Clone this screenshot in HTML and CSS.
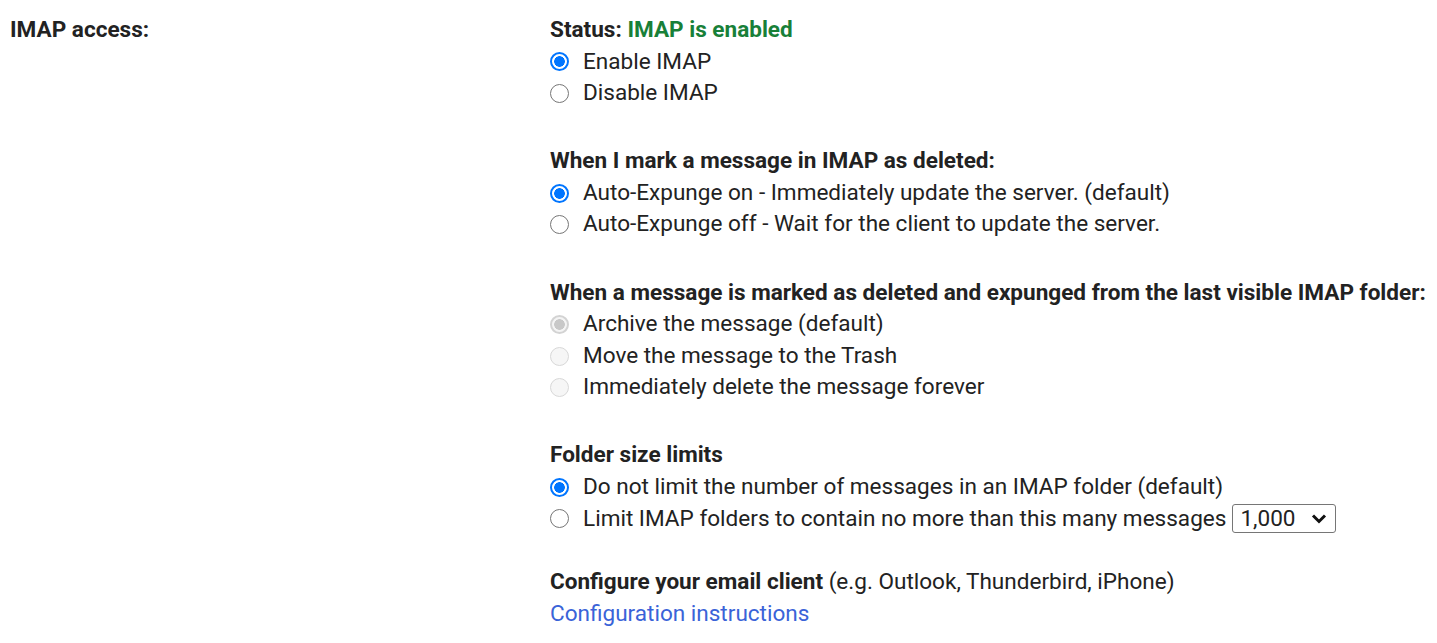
FILE: index.html
```html
<!DOCTYPE html>
<html>
<head>
<meta charset="utf-8">
<link rel="stylesheet" href="styles.css">
</head>
<body>
<div class="settings-row">
  <div class="label">IMAP access:</div>
  <div class="content">
    <div class="section">
      <div class="heading">Status: <span class="ok">IMAP is enabled</span></div>
      <label class="option"><input type="radio" name="imap" class="radio" checked><span>Enable IMAP</span></label>
      <label class="option"><input type="radio" name="imap" class="radio"><span>Disable IMAP</span></label>
    </div>
    <div class="section">
      <div class="heading">When I mark a message in IMAP as deleted:</div>
      <label class="option"><input type="radio" name="exp" class="radio" checked><span>Auto-Expunge on - Immediately update the server. (default)</span></label>
      <label class="option"><input type="radio" name="exp" class="radio"><span>Auto-Expunge off - Wait for the client to update the server.</span></label>
    </div>
    <div class="section">
      <div class="heading">When a message is marked as deleted and expunged from the last visible IMAP folder:</div>
      <label class="option disabled"><input type="radio" name="del" class="radio" checked disabled><span>Archive the message (default)</span></label>
      <label class="option disabled"><input type="radio" name="del" class="radio" disabled><span>Move the message to the Trash</span></label>
      <label class="option disabled"><input type="radio" name="del" class="radio" disabled><span>Immediately delete the message forever</span></label>
    </div>
    <div class="section section-tight">
      <div class="heading">Folder size limits</div>
      <label class="option"><input type="radio" name="lim" class="radio" checked><span>Do not limit the number of messages in an IMAP folder (default)</span></label>
      <div class="option"><input type="radio" name="lim" class="radio"><span>Limit IMAP folders to contain no more than this many messages</span>
        <div class="select"><span>1,000</span><svg class="chev" viewBox="0 0 16 11" width="16" height="11"><path d="M2 2.5 L8 8.5 L14 2.5" fill="none" stroke="#111" stroke-width="3"/></svg></div>
      </div>
    </div>
    <div class="section">
      <div class="line"><span class="bold">Configure your email client</span> (e.g. Outlook, Thunderbird, iPhone)</div>
      <div class="line"><a class="link" href="#">Configuration instructions</a></div>
    </div>
  </div>
</div>
</body>
</html>
```
FILE: styles.css
```css
html, body {
  margin: 0;
  padding: 0;
  background: #fff;
}
body {
  font-family: Roboto, "Noto Sans", Arial, sans-serif;
  font-size: 22.55px;
  color: #222;
  line-height: 31.6px;
}
.settings-row {
  display: grid;
  grid-template-columns: 540px 1fr;
  padding: 14px 0 0 10px;
}
.label {
  font-weight: 700;
}
.section {
  margin-bottom: 36.5px;
}
.section-tight {
  margin-bottom: 32px;
}
.heading, .bold {
  font-weight: 700;
}
.ok {
  color: #188038;
}
.option {
  display: flex;
  align-items: center;
  height: 31.6px;
}
.radio {
  appearance: none;
  -webkit-appearance: none;
  width: 19px;
  height: 19px;
  margin: 1px 14px 0 0;
  border: 1.5px solid #767676;
  border-radius: 50%;
  box-sizing: border-box;
  background: #fff;
  flex: none;
}
.radio:checked {
  border: 2px solid #0075ff;
  background: radial-gradient(circle, #0075ff 0 5px, #fff 5.6px);
}
.radio:disabled {
  border: 1.5px solid #d8d8d8;
  background: #f6f6f6;
}
.radio:disabled:checked {
  border: 2px solid #d3d3d3;
  background: radial-gradient(circle, #c8c8c8 0 5px, #f4f4f4 5.6px);
}
.select {
  display: flex;
  align-items: center;
  justify-content: space-between;
  width: 104px;
  height: 29px;
  box-sizing: border-box;
  margin-left: 6px;
  padding: 0 8px 0 7px;
  border: 1px solid #767676;
  border-radius: 3px;
  line-height: 27px;
  color: #222;
}
.chev {
  display: block;
}
.link {
  color: #3a63d8;
  text-decoration: none;
}
```
